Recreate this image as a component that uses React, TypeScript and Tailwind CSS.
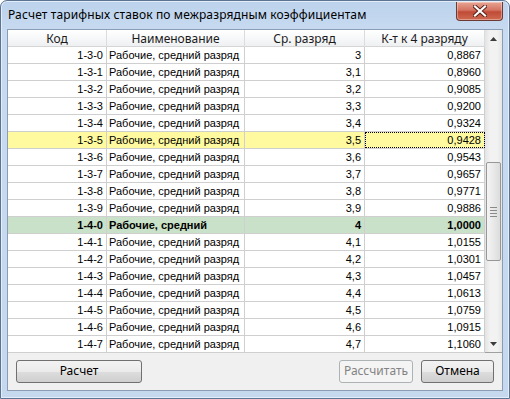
import React from "react";

type Row = { code: string; name: string; r: string; k: string; kind?: "y" | "g" };

const rows: Row[] = [
  { code: "1-3-0", name: "Рабочие, средний разряд", r: "3", k: "0,8867" },
  { code: "1-3-1", name: "Рабочие, средний разряд", r: "3,1", k: "0,8960" },
  { code: "1-3-2", name: "Рабочие, средний разряд", r: "3,2", k: "0,9085" },
  { code: "1-3-3", name: "Рабочие, средний разряд", r: "3,3", k: "0,9200" },
  { code: "1-3-4", name: "Рабочие, средний разряд", r: "3,4", k: "0,9324" },
  { code: "1-3-5", name: "Рабочие, средний разряд", r: "3,5", k: "0,9428", kind: "y" },
  { code: "1-3-6", name: "Рабочие, средний разряд", r: "3,6", k: "0,9543" },
  { code: "1-3-7", name: "Рабочие, средний разряд", r: "3,7", k: "0,9657" },
  { code: "1-3-8", name: "Рабочие, средний разряд", r: "3,8", k: "0,9771" },
  { code: "1-3-9", name: "Рабочие, средний разряд", r: "3,9", k: "0,9886" },
  { code: "1-4-0", name: "Рабочие, средний", r: "4", k: "1,0000", kind: "g" },
  { code: "1-4-1", name: "Рабочие, средний разряд", r: "4,1", k: "1,0155" },
  { code: "1-4-2", name: "Рабочие, средний разряд", r: "4,2", k: "1,0301" },
  { code: "1-4-3", name: "Рабочие, средний разряд", r: "4,3", k: "1,0457" },
  { code: "1-4-4", name: "Рабочие, средний разряд", r: "4,4", k: "1,0613" },
  { code: "1-4-5", name: "Рабочие, средний разряд", r: "4,5", k: "1,0759" },
  { code: "1-4-6", name: "Рабочие, средний разряд", r: "4,6", k: "1,0915" },
  { code: "1-4-7", name: "Рабочие, средний разряд", r: "4,7", k: "1,1060" },
];

function CloseButton() {
  return (
    <div className="mt-[1px] flex h-[19px] w-[47px] items-center justify-center rounded-b-[4px] border border-t-0 border-[#6d3a33] bg-[linear-gradient(#e8a493_0%,#d47462_45%,#c04a36_55%,#cf6a50_100%)] shadow-[inset_0_0_0_1px_rgba(255,255,255,0.35)]">
      <svg width="14" height="12" viewBox="0 0 14 12">
        <path d="M2 1.5 L12 10.5 M12 1.5 L2 10.5" stroke="#5a1e16" strokeWidth="4" strokeLinecap="square" />
        <path d="M2 1.5 L12 10.5 M12 1.5 L2 10.5" stroke="#ffffff" strokeWidth="2.2" strokeLinecap="square" />
      </svg>
    </div>
  );
}

function Scrollbar() {
  return (
    <div className="flex w-[17px] flex-col bg-[linear-gradient(90deg,#e3e3e3,#f2f2f2_30%,#f2f2f2_70%,#e6e6e6)]">
      <div className="flex h-[17px] items-center justify-center">
        <svg width="7" height="4" viewBox="0 0 7 4"><path d="M0 4 L3.5 0 L7 4 Z" fill="#3c3c3c" /></svg>
      </div>
      <div className="h-[115px]" />
      <div className="mx-[1px] flex h-[99px] flex-col items-center justify-center gap-[2px] rounded-[2px] border border-[#979797] bg-[linear-gradient(90deg,#f4f4f4,#e9e9e9_50%,#dcdcdc)]">
        <div className="h-px w-[7px] bg-[#8a8a8a]" />
        <div className="h-px w-[7px] bg-[#8a8a8a]" />
        <div className="h-px w-[7px] bg-[#8a8a8a]" />
        <div className="h-px w-[7px] bg-[#8a8a8a]" />
      </div>
      <div className="flex-1" />
      <div className="flex h-[17px] items-center justify-center">
        <svg width="7" height="4" viewBox="0 0 7 4"><path d="M0 0 L3.5 4 L7 0 Z" fill="#3c3c3c" /></svg>
      </div>
    </div>
  );
}

export default function App() {
  const hdr = "flex items-center justify-center border-r border-[#dcdcdc] text-[12px] text-[#1b1b1b]";
  return (
    <div className="h-[399px] w-[510px] overflow-hidden bg-white">
      <div
        className="flex h-[399px] w-[510px] flex-col overflow-hidden rounded-t-[7px] border border-[#5c7492] bg-[linear-gradient(#bcd2ec,#c7daf0_30px,#c5d8ee)] shadow-[inset_0_0_0_1px_#e4eefa]"
        style={{ fontFamily: '"Noto Sans", "Open Sans", sans-serif' }}
      >
        <div className="flex h-[28px] items-start justify-between pl-[7px] pr-[6px]">
          <div className="pt-[6px] text-[12px] leading-[16px] tracking-[0.13px] text-black">
            Расчет тарифных ставок по межразрядным коэффициентам
          </div>
          <CloseButton />
        </div>
        <div className="mx-[6px] mb-[7px] flex flex-1 flex-col border border-[#8b9db5] bg-[#f0f0f0]">
          <div className="flex h-[323px] border-b border-[#a0a0a0] bg-white">
            <div className="flex flex-1 flex-col">
              <div className="grid h-[17px] grid-cols-[99px_138px_120px_120px] border-b border-[#d5d5d5] bg-[linear-gradient(#ffffff,#f7f8f9_50%,#eef0f2)]">
                <div className={hdr}>Код</div>
                <div className={hdr}>Наименование</div>
                <div className={hdr}>Ср. разряд</div>
                <div className={hdr}>К-т к 4 разряду</div>
              </div>
              {rows.map((row) => {
                const bg = row.kind === "y" ? "bg-[#fffa9f]" : row.kind === "g" ? "bg-[#c8e1c8]" : "bg-white";
                const fw = row.kind === "g" ? "font-bold" : "font-normal";
                const cell = "flex h-full items-center border-r border-[#cfcfcf] whitespace-nowrap overflow-hidden";
                return (
                  <div
                    key={row.code}
                    className={`grid h-[17px] grid-cols-[99px_138px_120px_120px] border-b border-[#cfcfcf] text-[11px] text-black ${bg} ${fw}`}
                    style={{ fontFamily: '"Liberation Sans", Arial, sans-serif' }}
                  >
                    <div className={`${cell} justify-end pr-[3px]`}>{row.code}</div>
                    <div className={`${cell} justify-start pl-[2px]`}>{row.name}</div>
                    <div className={`${cell} justify-end pr-[3px]`}>{row.r}</div>
                    <div className={`${cell} justify-end pr-[3px] ${row.kind === "y" ? "outline-1 outline-dotted outline-black -outline-offset-1" : ""}`}>{row.k}</div>
                  </div>
                );
              })}
            </div>
            <Scrollbar />
          </div>
          <div className="flex flex-1 items-center justify-between px-[8px] pb-[1px]">
            <button className="h-[23px] w-[126px] rounded-[3px] border border-[#707070] bg-[linear-gradient(#f2f2f2,#ebebeb_50%,#dddddd_51%,#cfcfcf)] text-[12px] text-black">
              Расчет
            </button>
            <div className="flex gap-[8px]">
              <button className="h-[23px] w-[74px] rounded-[3px] border border-[#adb2b5] bg-[#f4f4f4] text-[12px] text-[#838383]">
                Рассчитать
              </button>
              <button className="h-[23px] w-[73px] rounded-[3px] border border-[#707070] bg-[linear-gradient(#f2f2f2,#ebebeb_50%,#dddddd_51%,#cfcfcf)] text-[12px] text-black">
                Отмена
              </button>
            </div>
          </div>
        </div>
      </div>
    </div>
  );
}
